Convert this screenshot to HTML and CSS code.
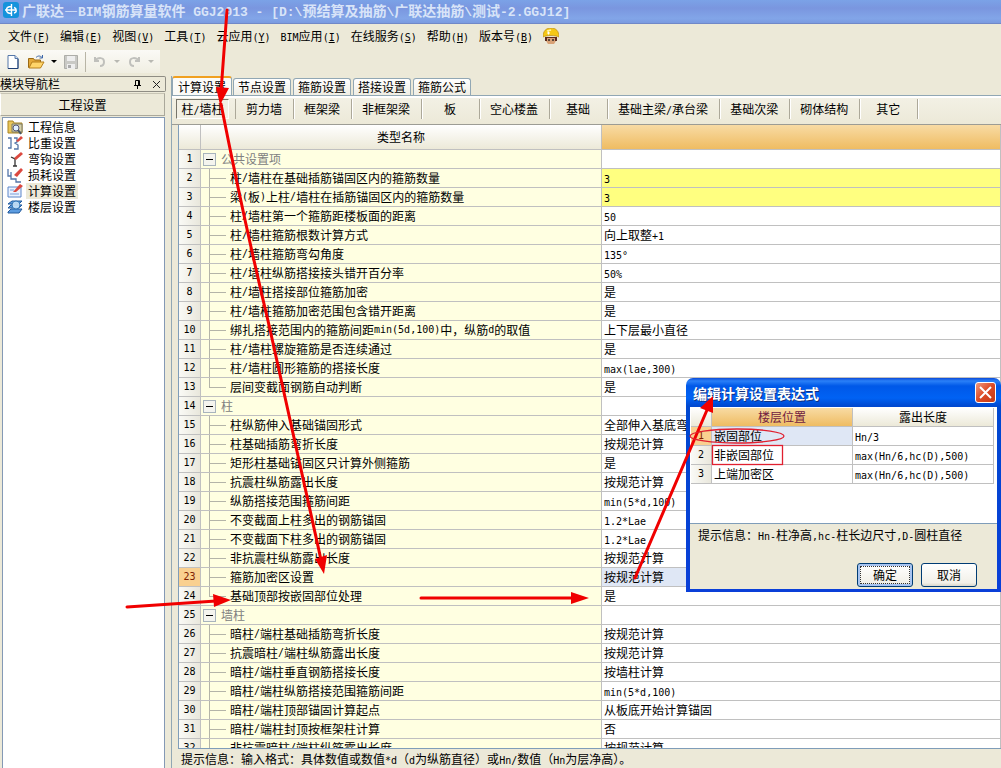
FILE: index.html
```html
<!DOCTYPE html>
<html lang="zh-CN">
<head>
<meta charset="utf-8">
<title>广联达—BIM钢筋算量软件 GGJ2013</title>
<link rel="stylesheet" href="styles.css">
</head>
<body>
<header class="titlebar">
  <svg class="applogo" viewBox="0 0 16 16" aria-hidden="true"><rect width="16" height="16" rx="3" fill="#1593dc"/><path d="M8.500 2v12M8.500 4.500c-3 0-5 1-5 3.500s2 3.500 5 3.500M2 8h11M11 5.500c3 1 3 5 0 5.500" fill="none" stroke="#fff" stroke-width="1.400"/></svg>
  <h1>广联达—<span class="l">BIM</span>钢筋算量软件<span class="l"> GGJ2013 - [D:\</span>预结算及抽筋<span class="l">\</span>广联达抽筋<span class="l">\</span>测试<span class="l">-2.GGJ12]</span></h1>
</header>
<nav class="menubar">
  <button>文件<span class="l">(<u>F</u>)</span></button>
  <button>编辑<span class="l">(<u>E</u>)</span></button>
  <button>视图<span class="l">(<u>V</u>)</span></button>
  <button>工具<span class="l">(<u>T</u>)</span></button>
  <button>云应用<span class="l">(<u>Y</u>)</span></button>
  <button><span class="l">BIM</span>应用<span class="l">(<u>I</u>)</span></button>
  <button>在线服务<span class="l">(<u>S</u>)</span></button>
  <button>帮助<span class="l">(<u>H</u>)</span></button>
  <button>版本号<span class="l">(<u>B</u>)</span></button>
  <svg class="helper" viewBox="0 0 16 16" aria-hidden="true"><path d="M3 9h10v4l-2 3H5l-2-3z" fill="#d9a277"/><path d="M2 9h12v4h-2v-3H4v3H2z" fill="#5b2a1c"/><path d="M0 9C0 3 3 0 8 0s8 3 8 9c-4-2-12-2-16 0z" fill="#f5c815" stroke="#b98a12" stroke-width=".7"/><path d="M4 3l4-1" stroke="#fff4a0" stroke-width="1.5"/><path d="M6 11v2M10 11v2" stroke="#222" stroke-width="1.4"/><path d="M4 5h3M5.500 3.500v3" stroke="#fff"/></svg>
</nav>
<div class="toolbar">
  <button aria-label="新建"><svg width="16" height="16" viewBox="0 0 16 16"><path d="M3 1.500h7l3 3v10H3z" fill="#fff" stroke="#5577a8"/><path d="M10 1.500v3h3" fill="#cfdcf2" stroke="#5577a8"/><path d="M3 14.500h10V5" fill="none" stroke="#1f3f75"/></svg></button>
  <button aria-label="打开"><svg width="18" height="16" viewBox="0 0 18 16"><path d="M1.500 13.500v-9h5l1 1.500h6v7.500z" fill="#e5a93a" stroke="#9a6a14"/><path d="M2 14l3-6h12l-3.500 6z" fill="#ffd56a" stroke="#b67f1b"/><path d="M9 3.500c2-2 4-2 6 0M15.500 1v3h-3" fill="none" stroke="#3c66a8"/></svg></button>
  <span class="arrow on"></span>
  <button aria-label="保存"><svg width="16" height="16" viewBox="0 0 16 16"><path d="M1.500 1.500h13v13h-13z" fill="#c9c9c5" stroke="#adada8"/><path d="M4 2h8v5H4zM4 10h8v5H4z" fill="#eee"/><path d="M5 11h3v3H5z" fill="#aaa"/></svg></button>
  <span class="sep"></span>
  <button aria-label="撤销"><svg width="16" height="16" viewBox="-1 -1 16 16"><path d="M2 2v4h4M2 6c3-4 9-4 9 1 0 2-1 4-4 4" fill="none" stroke="#c0c0bc" stroke-width="2"/></svg></button>
  <span class="arrow"></span>
  <button aria-label="重做"><svg width="16" height="16" viewBox="-1 -1 16 16"><path d="M12 2v4H8M12 6C9 2 3 2 3 7c0 2 1 4 4 4" fill="none" stroke="#c0c0bc" stroke-width="2"/></svg></button>
  <span class="arrow"></span>
</div>
<div class="workspace">
  <aside class="side">
    <div class="sidehead"><h2>模块导航栏</h2>
      <button aria-label="固定"><svg width="9" height="9" viewBox="0 0 9 9"><path d="M2.500 5V.5h4V5M1 5.500h7M4.500 5.500V9M5.500 1v4" fill="none" stroke="#000"/></svg></button>
      <button aria-label="关闭"><svg width="9" height="9" viewBox="0 0 9 9"><path d="M1 1l7 7M8 1L1 8" stroke="#222"/></svg></button>
    </div>
    <button class="group">工程设置</button>
    <nav class="tree">
      <a href="#"><svg viewBox="0 0 16 16"><path d="M1 2h5l1 2h8v10H1z" fill="#e9c65a" stroke="#a98423"/><path d="M5 5h10v8H5z" fill="#d8d2a8" stroke="#7a7a66"/><circle cx="9" cy="9" r="3" fill="#dff0ff" stroke="#557"/><path d="M11 11l3 4" stroke="#456" stroke-width="2"/></svg><span>工程信息</span></a>
      <a href="#"><svg viewBox="0 0 16 16"><path d="M1 3h3v10H1M7 3h3v4L8 8l3 2v4H7" fill="none" stroke="#5476a8" stroke-width="1.300"/><path d="M9 6l5-5 2 2-5 4z" fill="#dc4940"/></svg><span>比重设置</span></a>
      <a href="#"><svg viewBox="0 0 16 16"><path d="M4 6l4 2v7M6 15h4" fill="none" stroke="#333" stroke-width="1.300"/><path d="M7 7l7-6 2 2-7 6z" fill="#dc4940"/></svg><span>弯钩设置</span></a>
      <a href="#"><svg viewBox="0 0 16 16"><path d="M1 2v7h3V5v7h5v3h5" fill="none" stroke="#5476a8" stroke-width="1.300"/><path d="M7 8l7-7 2 2-6 7z" fill="#dc4940"/></svg><span>损耗设置</span></a>
      <a href="#" class="sel"><svg viewBox="0 0 16 16"><path d="M1 4h13v10H1z" fill="#eaf2ff" stroke="#5c86c8"/><path d="M3 7h4M3 11h9" stroke="#7d9fd8"/><path d="M6 9l7-8 3 2-7 6z" fill="#dc4940"/></svg><span>计算设置</span></a>
      <a href="#"><svg viewBox="0 0 16 16"><path d="M1 5l4-3h10l-3 3zM1 9l3-3h11l-3 3zM1 13l3-3h11l-3 4H1z" fill="#5c9ce0" stroke="#235a9c"/><circle cx="9" cy="6" r="4" fill="#d6edff" fill-opacity=".8" stroke="#3478b8"/></svg><span>楼层设置</span></a>
    </nav>
  </aside>
  <main class="main">
    <div class="tabs">
      <button class="active">计算设置</button><button>节点设置</button><button>箍筋设置</button><button>搭接设置</button><button>箍筋公式</button>
    </div>
    <div class="subtabs">
      <button class="pressed">柱<span class="l">/</span>墙柱</button><button>剪力墙</button><button>框架梁</button><button>非框架梁</button><button>板</button><button>空心楼盖</button><button>基础</button><button>基础主梁<span class="l">/</span>承台梁</button><button>基础次梁</button><button>砌体结构</button><button>其它</button>
    </div>
    <div class="gridbox">
      <table class="grid">
        <colgroup><col class="cnum"><col class="cname"><col></colgroup>
        <thead><tr><th></th><th>类型名称</th><th class="hot"></th></tr></thead>
        <tbody>
        <tr class="cat"><th>1</th><td><div><button aria-label="折叠"></button>公共设置项</div></td><td></td></tr>
        <tr class="warn"><th>2</th><td><div><i></i>柱<span class="l">/</span>墙柱在基础插筋锚固区内的箍筋数量</div></td><td><span class="l">3</span></td></tr>
        <tr class="warn"><th>3</th><td><div><i></i>梁<span class="l">(</span>板<span class="l">)</span>上柱<span class="l">/</span>墙柱在插筋锚固区内的箍筋数量</div></td><td><span class="l">3</span></td></tr>
        <tr><th>4</th><td><div><i></i>柱<span class="l">/</span>墙柱第一个箍筋距楼板面的距离</div></td><td><span class="l">50</span></td></tr>
        <tr><th>5</th><td><div><i></i>柱<span class="l">/</span>墙柱箍筋根数计算方式</div></td><td>向上取整<span class="l">+1</span></td></tr>
        <tr><th>6</th><td><div><i></i>柱<span class="l">/</span>墙柱箍筋弯勾角度</div></td><td><span class="l">135°</span></td></tr>
        <tr><th>7</th><td><div><i></i>柱<span class="l">/</span>墙柱纵筋搭接接头错开百分率</div></td><td><span class="l">50%</span></td></tr>
        <tr><th>8</th><td><div><i></i>柱<span class="l">/</span>墙柱搭接部位箍筋加密</div></td><td>是</td></tr>
        <tr><th>9</th><td><div><i></i>柱<span class="l">/</span>墙柱箍筋加密范围包含错开距离</div></td><td>是</td></tr>
        <tr><th>10</th><td><div><i></i>绑扎搭接范围内的箍筋间距<span class="l">min(5d,100)</span>中，纵筋<span class="l">d</span>的取值</div></td><td>上下层最小直径</td></tr>
        <tr><th>11</th><td><div><i></i>柱<span class="l">/</span>墙柱螺旋箍筋是否连续通过</div></td><td>是</td></tr>
        <tr><th>12</th><td><div><i></i>柱<span class="l">/</span>墙柱圆形箍筋的搭接长度</div></td><td><span class="l">max(lae,300)</span></td></tr>
        <tr><th>13</th><td><div><i class="end"></i>层间变截面钢筋自动判断</div></td><td>是</td></tr>
        <tr class="cat"><th>14</th><td><div><button aria-label="折叠"></button>柱</div></td><td></td></tr>
        <tr><th>15</th><td><div><i></i>柱纵筋伸入基础锚固形式</div></td><td>全部伸入基底弯折</td></tr>
        <tr><th>16</th><td><div><i></i>柱基础插筋弯折长度</div></td><td>按规范计算</td></tr>
        <tr><th>17</th><td><div><i></i>矩形柱基础锚固区只计算外侧箍筋</div></td><td>是</td></tr>
        <tr><th>18</th><td><div><i></i>抗震柱纵筋露出长度</div></td><td>按规范计算</td></tr>
        <tr><th>19</th><td><div><i></i>纵筋搭接范围箍筋间距</div></td><td><span class="l">min(5*d,100)</span></td></tr>
        <tr><th>20</th><td><div><i></i>不变截面上柱多出的钢筋锚固</div></td><td><span class="l">1.2*Lae</span></td></tr>
        <tr><th>21</th><td><div><i></i>不变截面下柱多出的钢筋锚固</div></td><td><span class="l">1.2*Lae</span></td></tr>
        <tr><th>22</th><td><div><i></i>非抗震柱纵筋露出长度</div></td><td>按规范计算</td></tr>
        <tr class="current"><th>23</th><td><div><i></i>箍筋加密区设置</div></td><td>按规范计算</td></tr>
        <tr><th>24</th><td><div><i class="end"></i>基础顶部按嵌固部位处理</div></td><td>是</td></tr>
        <tr class="cat"><th>25</th><td><div><button aria-label="折叠"></button>墙柱</div></td><td></td></tr>
        <tr><th>26</th><td><div><i></i>暗柱<span class="l">/</span>端柱基础插筋弯折长度</div></td><td>按规范计算</td></tr>
        <tr><th>27</th><td><div><i></i>抗震暗柱<span class="l">/</span>端柱纵筋露出长度</div></td><td>按规范计算</td></tr>
        <tr><th>28</th><td><div><i></i>暗柱<span class="l">/</span>端柱垂直钢筋搭接长度</div></td><td>按墙柱计算</td></tr>
        <tr><th>29</th><td><div><i></i>暗柱<span class="l">/</span>端柱纵筋搭接范围箍筋间距</div></td><td><span class="l">min(5*d,100)</span></td></tr>
        <tr><th>30</th><td><div><i></i>暗柱<span class="l">/</span>端柱顶部锚固计算起点</div></td><td>从板底开始计算锚固</td></tr>
        <tr><th>31</th><td><div><i></i>暗柱<span class="l">/</span>端柱封顶按框架柱计算</div></td><td>否</td></tr>
        <tr><th>32</th><td><div><i></i>非抗震暗柱<span class="l">/</span>端柱纵筋露出长度</div></td><td>按规范计算</td></tr>
        </tbody>
      </table>
    </div>
    <p class="hint">提示信息：输入格式：具体数值或数值<span class="l">*d</span>（<span class="l">d</span>为纵筋直径）或<span class="l">Hn/</span>数值（<span class="l">Hn</span>为层净高）。</p>
  </main>
</div>

<section class="dialog" role="dialog" aria-labelledby="dlgtitle">
  <div class="dlghead"><h2 id="dlgtitle">编辑计算设置表达式</h2>
    <button aria-label="关闭"><svg width="13" height="13" viewBox="0 0 13 13"><path d="M1 1l11 11M12 1L1 12" stroke="#fff" stroke-width="2"/></svg></button></div>
  <div class="dlgbody">
    <div class="dlggrid">
      <table>
        <colgroup><col class="cnum"><col><col></colgroup>
        <thead><tr><th></th><th class="hot">楼层位置</th><th>露出长度</th></tr></thead>
        <tbody>
        <tr class="current"><th>1</th><td>嵌固部位</td><td><span class="l">Hn/3</span></td></tr>
        <tr><th>2</th><td>非嵌固部位</td><td><span class="l">max(Hn/6,hc(D),500)</span></td></tr>
        <tr><th>3</th><td>上端加密区</td><td><span class="l">max(Hn/6,hc(D),500)</span></td></tr>
        </tbody>
      </table>
    </div>
    <p>提示信息：<span class="l">Hn-</span>柱净高<span class="l">,hc-</span>柱长边尺寸<span class="l">,D-</span>圆柱直径</p>
    <div class="actions"><button class="default">确定</button><button>取消</button></div>
  </div>
</section>

<svg class="marks" width="1001" height="768" viewBox="0 0 1001 768" aria-hidden="true">
  <g fill="none" stroke="#f00000" stroke-width="3" stroke-linecap="round">
    <path d="M227 10L221 92M221 104C236 180 251 250 269 325C286 400 304 480 321 560"/>
    <path d="M127 607L216 601M421 598H573M635 578L707 410"/>
  </g>
  <g fill="#f00000">
    <path d="M220 105L216 87l13 1zM324 574l-9-15 12-4zM231 600l-17 7-1-13zM589 598l-18 6v-12zM713 396l-13 12 13 5z"/>
  </g>
  <g fill="none" stroke="#e02030" stroke-width="1.300"><ellipse cx="737" cy="436" rx="47" ry="7"/><rect x="712.500" y="445.500" width="70" height="19"/></g>
</svg>
</body>
</html>
```
FILE: styles.css
```css
* { box-sizing: border-box; }
body {
  margin: 0;
  height: 100vh;
  display: flex;
  flex-direction: column;
  overflow: hidden;
  position: relative;
  background: #ece9d8;
  color: #000;
  font: 12px/18px "Noto Sans CJK SC", sans-serif;
  white-space: nowrap;
}
.l { font: 10px/10px "DejaVu Sans Mono", monospace; white-space: pre; }
h1, h2, p { margin: 0; font-size: 12px; font-weight: normal; }
button {
  font: inherit;
  color: inherit;
  padding: 0;
  border: 0;
  background: none;
}
svg { display: block; flex: none; }

/* window caption */
.titlebar {
  flex: none;
  display: flex;
  align-items: center;
  gap: 3px;
  height: 24px;
  padding: 0 3px 4px;
  background: linear-gradient(#7ba2e7, #7a96df 35%, #82a5e8 80%, #7b9be0);
  border-bottom: 1px solid #7088c8;
}
.applogo { width: 16px; height: 16px; }
.titlebar h1 { font-size: 14px; font-weight: bold; color: #d8e4f8; }
.titlebar .l { font: bold 13px/13px "Liberation Mono", monospace; }

.menubar {
  flex: none;
  display: flex;
  align-items: center;
  gap: 10px;
  height: 24px;
  padding: 0 8px;
}
.helper { width: 16px; height: 16px; }

.toolbar {
  flex: none;
  align-self: flex-start;
  display: flex;
  align-items: center;
  width: 160px;
  height: 23px;
  margin-top: 2px;
  gap: 6px;
  padding: 0 5px;
  background: linear-gradient(#fbfaf6, #f0eee2);
}
.arrow { border: 3px solid transparent; border-top-color: #b8b8b2; border-bottom: 0; }
.arrow.on { border-top-color: #000; }
.sep { width: 1px; height: 20px; background: #b8b5a6; }

.workspace { flex: 1; display: flex; gap: 5px; min-height: 0; padding-top: 3px; }

/* navigation pane */
.side { flex: none; display: flex; flex-direction: column; width: 166px; }
.sidehead {
  display: flex;
  align-items: center;
  gap: 10px;
  height: 16px;
  margin-bottom: 1px;
  padding-right: 4px;
  border: 1px solid #8f8d84;
  border-left: 0;
  border-radius: 0 2px 2px 0;
}
.sidehead h2 { flex: 1; line-height: 14px; }
.group {
  height: 23px;
  margin-right: 1px;
  border: 1px solid #aaa89b;
  border-left-color: #fff;
  border-top-color: #c8c5b5;
  background: #ece9d8;
}
.tree {
  flex: 1;
  margin: 1px 1px 0 2px;
  padding: 1px 4px;
  background: #fff;
  border: 1px solid #8499b5;
  border-bottom: 0;
}
.tree a { display: flex; gap: 3px; height: 16px; color: #000; text-decoration: none; }
.tree svg { width: 16px; height: 16px; }
.tree span { padding: 0 2px; line-height: 16px; }
.tree .sel span { background: #ece9d8; }

/* settings area */
.main {
  flex: 1;
  display: flex;
  flex-direction: column;
  min-width: 0;
  border-left: 1px solid #91a7b4;
}
.tabs { display: flex; gap: 2px; align-items: flex-end; height: 19px; }
.tabs button {
  width: 58px;
  height: 17px;
  line-height: 16px;
  border: 1px solid #91a7b4;
  border-bottom: 0;
  border-radius: 3px 3px 0 0;
  background: linear-gradient(#fff, #f0eee4);
}
.tabs .active {
  width: 60px;
  height: 19px;
  margin-right: -1px;
  border-top: 2px solid #f0a020;
  background: #fbfbf8;
}
.subtabs {
  display: flex;
  align-items: center;
  height: 30px;
  padding: 0 0 2px 4px;
  border-top: 1px solid #91a7b4;
  border-bottom: 1px solid #9c9c94;
  box-shadow: inset 0 2px #fff;
  background: linear-gradient(#f3f1e6, #ece9d8);
}
.subtabs button {
  min-width: 58px;
  height: 20px;
  padding: 0 11px 0 10px;
  border-right: 1px solid #aca899;
  box-shadow: 1px 0 #fff;
}
.subtabs .pressed {
  min-width: 53px;
  margin-right: 6px;
  padding: 0 4px;
  border: 1px solid #fff;
  border-top-color: #77756a;
  border-left-color: #77756a;
  background: #f2f0e5;
  box-shadow: none;
}
.subtabs .pressed + button { min-width: 59px; border-left: 1px solid #aca899; }
.gridbox {
  flex: 1;
  min-height: 0;
  overflow: hidden;
  margin-left: 6px;
  border-left: 1px solid #7f9db9;
  border-bottom: 1px solid #7f9db9;
  background: #fff;
}
table { width: 100%; border-collapse: separate; border-spacing: 0; table-layout: fixed; }
th, td {
  height: 19px;
  padding: 0;
  border-right: 1px solid #c0c0c0;
  border-bottom: 1px solid #c0c0c0;
  font-weight: normal;
  line-height: 18px;
  text-align: left;
  vertical-align: middle;
  overflow: hidden;
}
th { text-align: center; background: linear-gradient(#fff, #ece9d8); }
tbody th {
  font: 10px/18px "DejaVu Sans Mono", monospace;
  background: linear-gradient(90deg, #fafaf6, #e9e7dc);
}
.cnum { width: 22px; }
.cname { width: 401px; }
.grid thead th { height: 25px; }
th.hot { background: linear-gradient(#f8dba4, #efbc62); }
.grid td:nth-child(2) { background: #ffffe1; }
.grid td:last-child { padding-left: 2px; }
.grid td div { display: flex; align-items: center; height: 18px; padding-left: 2px; }
.grid .warn td:last-child { background: #ffff80; }
.grid .cat td { color: #808080; }
.grid .cat button {
  width: 13px;
  height: 13px;
  margin-right: 5px;
  border: 1px solid #a8b4bc;
  background: linear-gradient(#000, #000) center / 7px 1px no-repeat, #f4f4ee;
}
.grid i {
  width: 17px;
  height: 18px;
  margin: 0 4px 0 6px;
  background:
    linear-gradient(#b4b4a8, #b4b4a8) 0 0 / 1px 100% no-repeat,
    linear-gradient(#b4b4a8, #b4b4a8) 0 50% / 100% 1px no-repeat;
}
.grid i.end { background-size: 1px 50%, 100% 1px; }
.current th { background: #f9d090; color: #802000; }
.grid .current td:last-child { background: #dfe7f5; }
.hint { height: 19px; padding-left: 9px; line-height: 19px; }

/* floating expression editor */
.dialog {
  position: absolute;
  left: 686px;
  top: 378px;
  width: 315px;
  padding: 0 4px 3px;
  border-radius: 7px 7px 0 0;
  background: linear-gradient(#0a4ad8, #2a80f8 3px, #0058e8 8px, #0062f4 20px, #0048d0 28px, #0a3fd8);
}
.dlghead { display: flex; align-items: center; justify-content: space-between; height: 29px; padding: 0 0 0 3px; }
.dlghead h2 { font-size: 14px; font-weight: bold; color: #fff; text-shadow: 1px 1px #103080; }
.dlghead button {
  display: flex;
  align-items: center;
  justify-content: center;
  width: 21px;
  height: 21px;
  margin-right: 1px;
  border: 1px solid #fff;
  border-radius: 3px;
  background: linear-gradient(135deg, #f09a80, #dd4a24 50%, #c33a18);
}
.dlgbody { background: #ece9d8; padding-bottom: 2px; }
.dlggrid { height: 117px; padding: 1px 3px 0 1px; background: #fff; border-bottom: 1px solid #7f9db9; }
.dlggrid .cnum { width: 21px; }
.dlggrid td { padding-left: 2px; }
.dlggrid .hot { color: #702040; }
.dlggrid .current td:nth-child(2) { background: #dfe7f5; }
.dlgbody p { padding: 2px 8px 0; }
.actions { display: flex; justify-content: flex-end; gap: 8px; padding: 19px 20px 0 0; }
.actions button {
  width: 56px;
  height: 24px;
  border: 1px solid #003c74;
  border-radius: 3px;
  background: linear-gradient(#fff, #f2f0e8 85%, #dcd8ca);
}
.actions .default { box-shadow: inset 0 0 0 2px #a8c4f0; outline: 1px dotted #333; outline-offset: -4px; }

.marks { position: absolute; left: 0; top: 0; pointer-events: none; }
```
